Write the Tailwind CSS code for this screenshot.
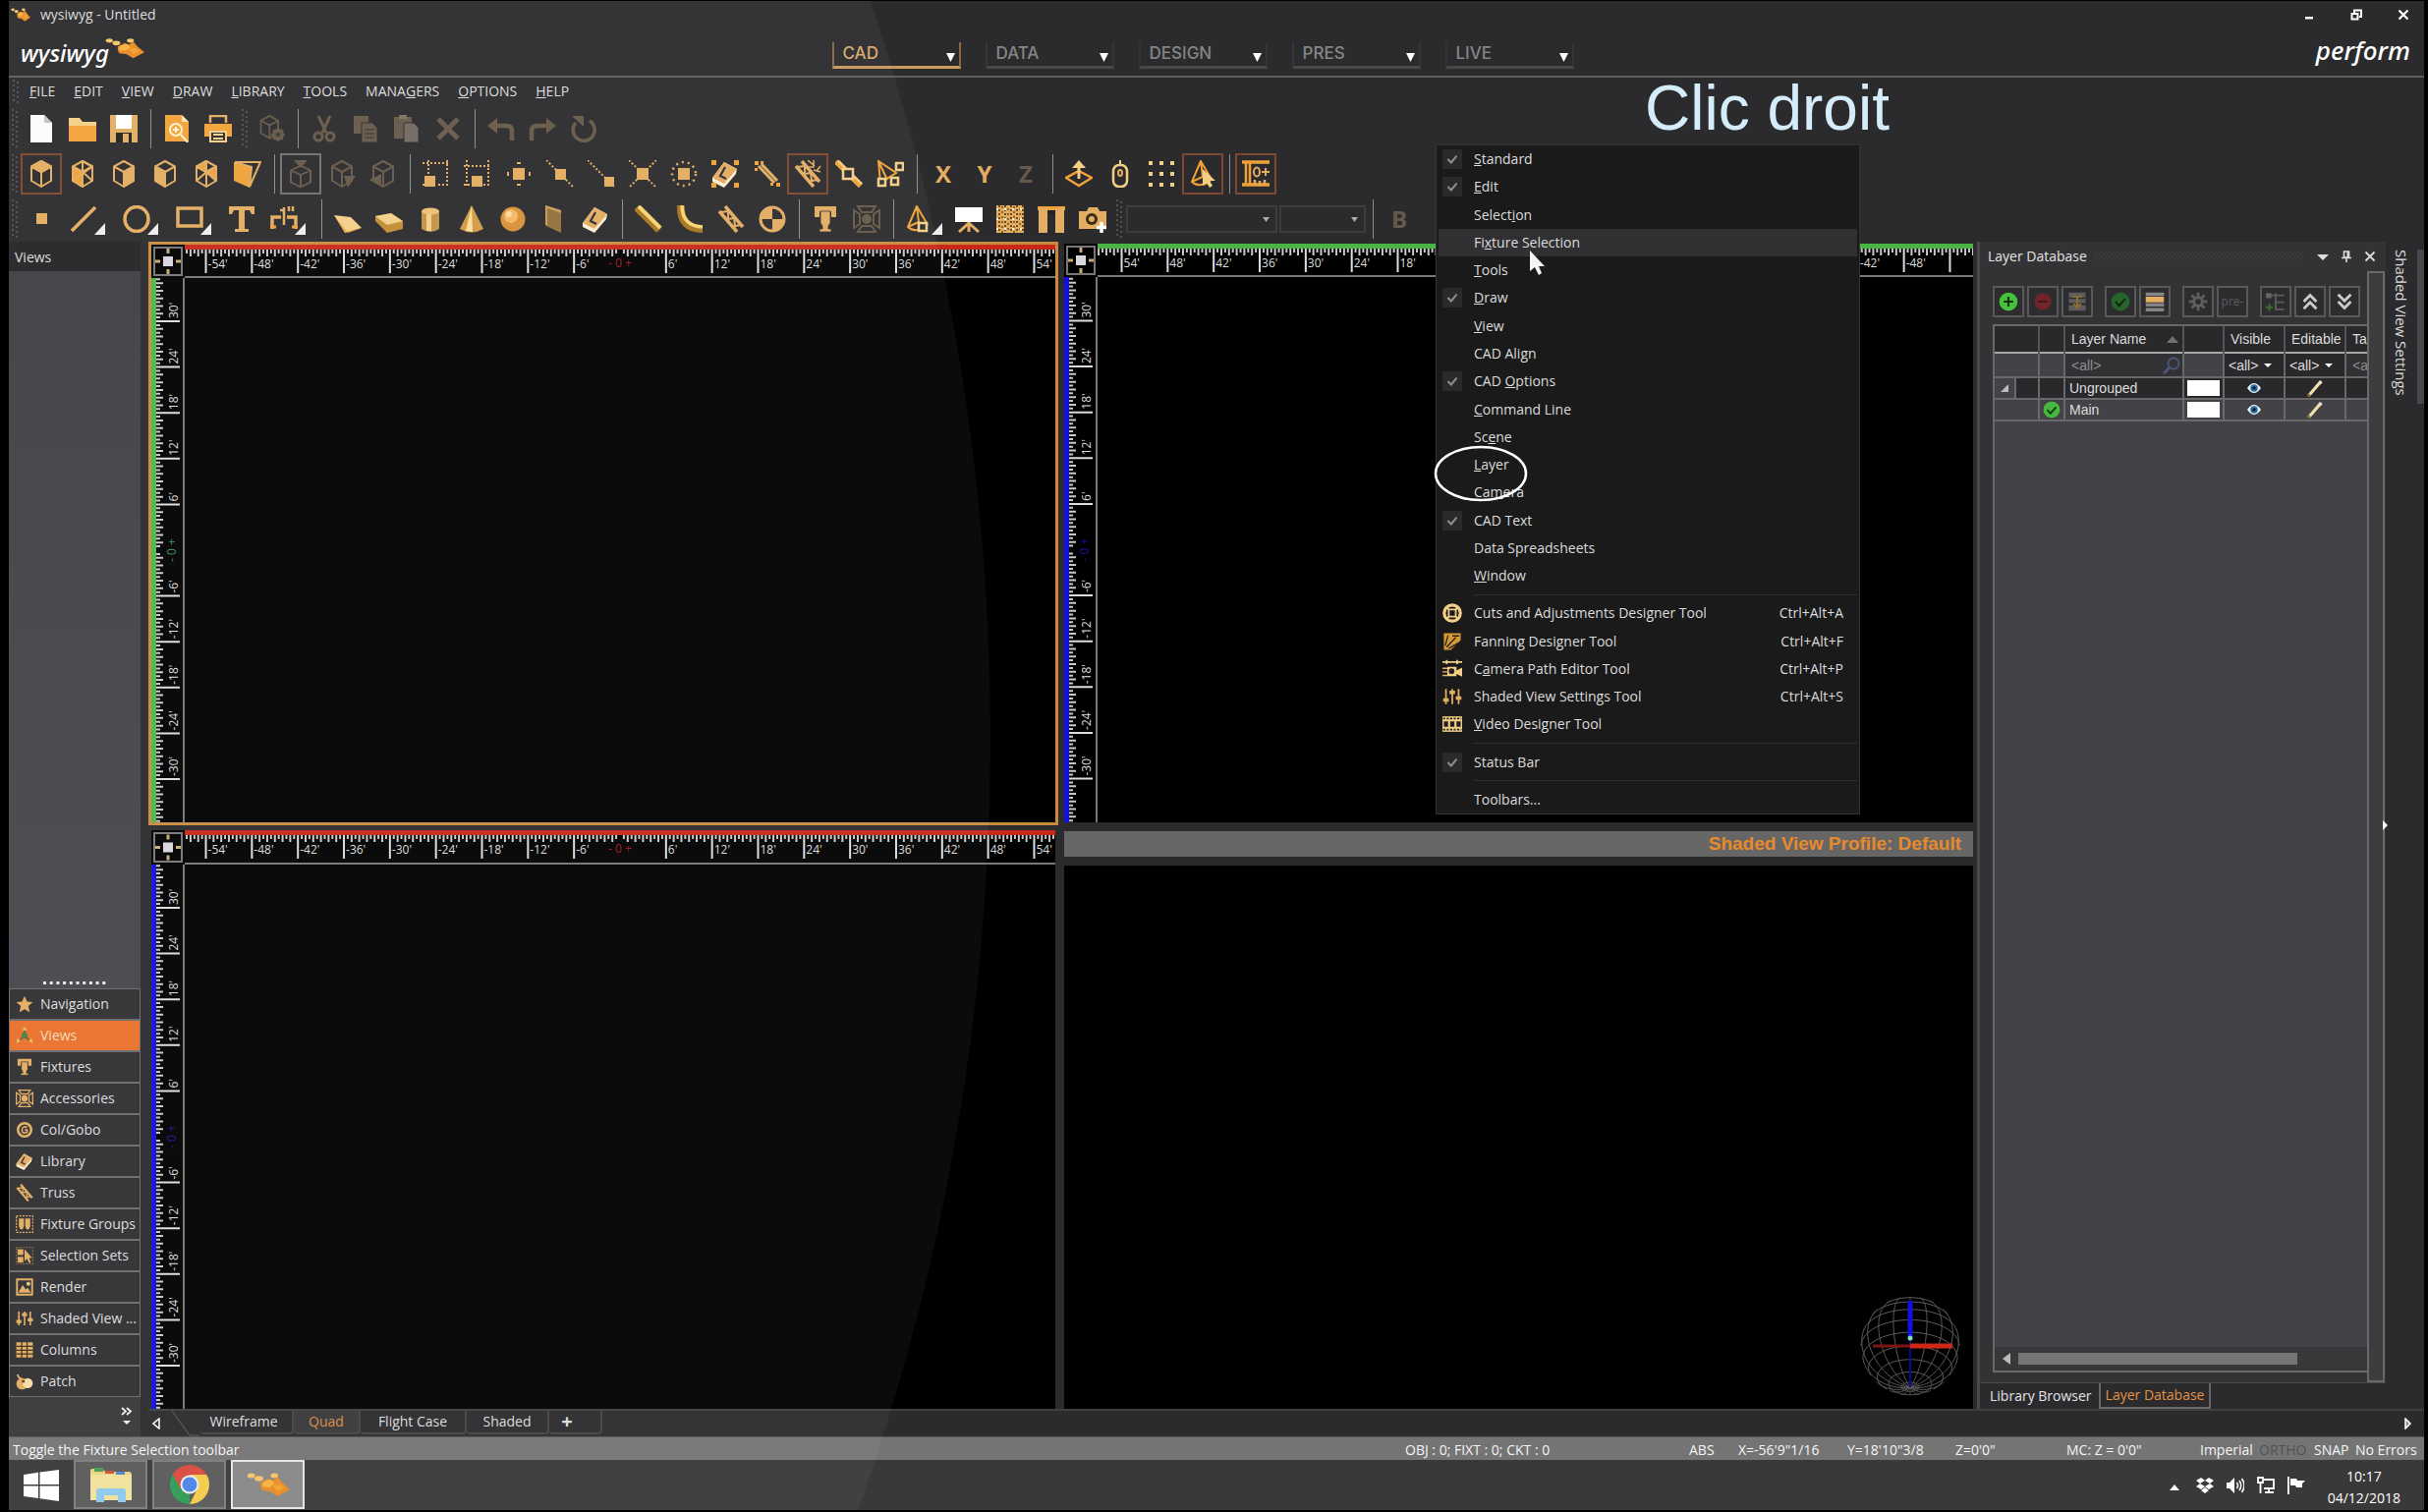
<!DOCTYPE html>
<html lang="en">
<head>
<meta charset="utf-8">
<title>wysiwyg - Untitled</title>
<script src="https://cdn.jsdelivr.net/npm/@tailwindcss/browser@4"></script>
</head>
<body class="h-screen overflow-hidden bg-black font-['Open_Sans',sans-serif] text-sm leading-5 font-medium text-[#dcdcdc]">
<div class="relative flex h-full flex-col overflow-hidden border-t border-r-4 border-b-2 border-l-9 border-black bg-[#2b2b2e]">

  <!-- Title and module tabs -->
  <header class="grid h-[78px] shrink-0 grid-cols-[1fr_auto_1fr] border-b-2 border-[#5e5e60] pr-7">
    <div class="flex flex-col">
      <h1 class="flex h-7 items-center gap-[6px] pl-[2px]"><svg class="h-4 w-5" viewBox="0 0 28 28" preserveAspectRatio="none" data-icon="splash"></svg><span class="pl-[4px]">wysiwyg - Untitled</span></h1>
      <div class="flex h-[46px] items-start pl-3">
        <span class="pt-[9px] font-['Noto_Sans',sans-serif] text-2xl leading-8 font-medium text-white italic">wysiwyg</span>
        <svg class="mt-2 -ml-1 h-6 w-10" viewBox="0 0 28 28" preserveAspectRatio="none" data-icon="splash"></svg>
      </div>
    </div>
    <nav id="modules" class="flex items-start gap-[25px] pt-[42px]"></nav>
    <div class="-mr-7 flex flex-col items-end">
      <div class="flex h-7 items-center gap-[26px] pr-[10px] text-white">
        <button class="flex size-[22px] items-center justify-center" aria-label="Minimize"><svg class="size-3" viewBox="0 0 12 12"><path d="M2 8h8v2.500H2z" fill="currentColor"/></svg></button>
        <button class="flex size-[22px] items-center justify-center" aria-label="Restore"><svg class="size-3" viewBox="0 0 12 12" fill="none" stroke="currentColor" stroke-width="2"><path d="M4 4V1.500h7V8H9"/><path d="M1.500 5h6v5.500h-6z"/></svg></button>
        <button class="flex size-[22px] items-center justify-center" aria-label="Close"><svg class="size-3" viewBox="0 0 12 12" stroke="currentColor" stroke-width="2.200"><path d="M1.500 1.500l9 9M10.500 1.500l-9 9"/></svg></button>
      </div>
      <span class="pt-[2px] pr-[14px] font-['Noto_Sans',sans-serif] text-[26px] leading-10 font-medium text-white italic">perform</span>
    </div>
  </header>

  <!-- Menu bar -->
  <nav id="menubar" class="flex h-7 shrink-0 items-center gap-[19px] pl-2"></nav>

  <!-- Toolbars -->
  <div id="bar1" class="flex h-[47px] shrink-0 items-center"></div>
  <div id="bar2" class="flex h-[46px] shrink-0 items-center"></div>
  <div id="bar3" class="flex h-[46px] shrink-0 items-center"></div>

  <!-- Workspace -->
  <main class="flex min-h-0 flex-1">
    <aside class="mr-2 flex w-[134px] shrink-0 flex-col bg-[#38383b]">
      <h2 class="h-[30px] shrink-0 bg-[#242426] px-[6px] py-[6px]">Views</h2>
      <div class="flex flex-1 items-end justify-center bg-gradient-to-b from-[#3f3e43] to-[#47464c] pb-1">
        <svg class="h-[3px] w-16"><path d="M0 1.500h64" stroke="#e8e8e8" stroke-width="3" stroke-dasharray="3 3.700"/></svg>
      </div>
      <nav id="side" class="flex shrink-0 flex-col gap-[2px] border border-[#6a6a6c] bg-[#6a6a6c]"></nav>
      <button class="flex h-10 shrink-0 items-center justify-end pr-2" aria-label="More"><svg class="h-6 w-3" viewBox="0 0 12 24"><path d="M1 3l4 3.500L1 10M6 3l4 3.500L6 10" fill="none" stroke="#eee" stroke-width="1.800"/><path d="M2 16h8l-4 4z" fill="#eee"/></svg></button>
    </aside>

    <div class="flex min-w-0 flex-1 flex-col">
      <div class="flex min-h-0 flex-1">
        <div id="views" class="grid min-w-0 flex-1 grid-cols-2 grid-rows-[594fr_589fr] gap-x-[6px] gap-y-[5px]">
          <section class="grid grid-cols-[34px_1fr] grid-rows-[34px_1fr] border-3 border-[#c98a3e] bg-black" data-h="#c8281c" data-v="#4fb548" data-sign="1" aria-label="Plan view"></section>
          <section class="mt-[2px] mb-[3px] grid grid-cols-[34px_1fr] grid-rows-[34px_1fr] bg-black" data-h="#4ab544" data-v="#1010e0" data-sign="-1" aria-label="Side view"></section>
          <section class="mx-[3px] grid grid-cols-[34px_1fr] grid-rows-[35px_1fr] bg-black" data-h="#c8281c" data-v="#1010e0" data-sign="1" aria-label="Front view"></section>
          <section class="flex flex-col" aria-label="Shaded view">
            <h3 class="mt-px mb-[9px] flex h-[26px] shrink-0 items-center justify-end bg-[#666667] pr-3 font-['Liberation_Sans',sans-serif] text-[19px] leading-6 font-bold text-[#e88a2a]">Shaded View Profile: Default</h3>
            <div class="flex flex-1 items-end justify-end bg-black pr-3 pb-3"><svg id="globe" class="size-[104px]" viewBox="-52 -52 104 104"></svg></div>
          </section>
        </div>

        <!-- Layer database panel -->
        <div class="flex w-[459px] shrink-0">
          <div class="ml-1 flex w-[416px] flex-col border-l-3 border-[#4a4a4c] bg-[#333336]">
            <div class="flex h-[30px] shrink-0 items-center pr-1 pl-2">
              <h2 class="text-[#e4e4e4]">Layer Database</h2>
              <svg class="mx-2 h-2 min-w-0 flex-1"><path d="M0 1h400M2 4h400M0 7h400" stroke="#505052" stroke-dasharray="1 3"/></svg>
              <button class="flex size-6 items-center justify-center" aria-label="Panel menu"><svg class="size-3" viewBox="0 0 12 12"><path d="M0 4h12L6 10z" fill="#ddd"/></svg></button>
              <button class="flex size-6 items-center justify-center" aria-label="Pin"><svg class="size-3" viewBox="0 0 12 12" fill="none" stroke="#ddd" stroke-width="1.600"><path d="M3.500 1h5v6h-5zM1 7.500h10M6 8v4M7.300 1v6"/></svg></button>
              <button class="flex size-6 items-center justify-center" aria-label="Close panel"><svg class="size-3" viewBox="0 0 12 12" stroke="#ddd" stroke-width="1.800"><path d="M1.500 1.500l9 9M10.500 1.500l-9 9"/></svg></button>
            </div>
            <div class="flex min-h-0 flex-1">
              <div class="flex min-w-0 flex-1 flex-col pl-[13px]">
                <div id="layerTools" class="flex h-[54px] shrink-0 items-center gap-[3px] pt-[7px]"></div>
                <div class="mb-[10px] flex min-h-0 flex-1 flex-col overflow-hidden border-2 border-r-0 border-[#69696b] bg-[#434247]">
                  <table class="w-[386px] table-fixed border-collapse font-['Liberation_Sans',sans-serif] text-sm leading-[18px] whitespace-nowrap">
                    <colgroup><col class="w-[45px]"><col class="w-[26px]"><col class="w-[121px]"><col class="w-[41px]"><col class="w-[62px]"><col class="w-[62px]"><col></colgroup>
                    <thead>
                      <tr class="h-[27px] border-b-2 border-[#a8a8a8] bg-[#29292b]">
                        <th class="border-r-2 border-[#555557]"></th><th class="border-r-2 border-[#555557]"></th>
                        <th class="border-r-2 border-[#555557] pl-[6px] text-left font-normal"><div class="flex items-center justify-between">Layer Name<svg class="mr-1 h-2 w-3" viewBox="0 0 12 8"><path d="M0 8h12L6 1z" fill="#707072"/></svg></div></th>
                        <th class="border-r-2 border-[#555557]"></th>
                        <th class="border-r-2 border-[#555557] pl-[6px] text-left font-normal">Visible</th>
                        <th class="border-r-2 border-[#555557] pl-[6px] text-left font-normal">Editable</th>
                        <th class="pl-[6px] text-left font-normal">Ta</th>
                      </tr>
                    </thead>
                    <tbody>
                      <tr class="h-[25px] border-b-2 border-[#69696b]">
                        <td class="border-r-2 border-[#69696b]"></td><td class="border-r-2 border-[#69696b]"></td>
                        <td class="border-r-2 border-[#69696b] bg-[#323234]"><div class="flex items-center justify-between"><input class="w-20 bg-transparent pl-[6px] placeholder:text-[#8c8c8e]" placeholder="&lt;all&gt;" aria-label="Filter by layer name"><svg class="mr-[2px] size-[18px]" viewBox="0 0 18 18" fill="none" stroke="#4a5578" stroke-width="2"><circle cx="11" cy="7" r="5.500"/><path d="M7 11l-6 6" stroke-width="3"/></svg></div></td>
                        <td class="border-r-2 border-[#69696b]"></td>
                        <td class="border-r-2 border-[#69696b] bg-[#29292b]"><button class="flex w-full items-center justify-between pr-3 pl-1">&lt;all&gt;<svg class="h-1 w-2" viewBox="0 0 8 4"><path d="M0 0h8L4 4z" fill="#fff"/></svg></button></td>
                        <td class="border-r-2 border-[#69696b] bg-[#29292b]"><button class="flex w-full items-center justify-between pr-3 pl-1">&lt;all&gt;<svg class="h-1 w-2" viewBox="0 0 8 4"><path d="M0 0h8L4 4z" fill="#fff"/></svg></button></td>
                        <td class="bg-[#323234] pl-[6px] text-[#8c8c8e]">&lt;all&gt;</td>
                      </tr>
                      <tr class="h-[22px] border-b-2 border-[#69696b] bg-[#29292b]">
                        <td class="border-r-2 border-[#69696b] p-0"><div class="flex h-5 w-[22px] items-center justify-center border-r-2 border-[#69696b] bg-[#434247]"><svg class="size-2" viewBox="0 0 8 8"><path d="M0 8h8V0z" fill="#bbb"/></svg></div></td>
                        <td class="border-r-2 border-[#69696b]"></td><td class="border-r-2 border-[#69696b] pl-1">Ungrouped</td>
                        <td class="border-r-2 border-[#69696b] px-[3px] py-px"><div class="h-4 bg-white"></div></td>
                        <td class="border-r-2 border-[#69696b]"><svg class="mx-auto block h-[14px] w-5" data-icon="eye"></svg></td>
                        <td class="border-r-2 border-[#69696b]"><svg class="mx-auto block size-[18px]" data-icon="pencil"></svg></td><td></td>
                      </tr>
                      <tr class="h-[22px] border-b-2 border-[#69696b]">
                        <td class="border-r-2 border-[#69696b]"></td>
                        <td class="border-r-2 border-[#69696b]"><svg class="mx-auto block size-[18px]" data-icon="ok"></svg></td><td class="border-r-2 border-[#69696b] pl-1">Main</td>
                        <td class="border-r-2 border-[#69696b] px-[3px] py-px"><div class="h-4 bg-white"></div></td>
                        <td class="border-r-2 border-[#69696b]"><svg class="mx-auto block h-[14px] w-5" data-icon="eye"></svg></td>
                        <td class="border-r-2 border-[#69696b]"><svg class="mx-auto block size-[18px]" data-icon="pencil"></svg></td><td></td>
                      </tr>
                    </tbody>
                  </table>
                  <div class="mt-auto flex h-6 items-center gap-2 bg-[#38383b] pl-2"><svg class="h-3 w-2" viewBox="0 0 8 12"><path d="M8 0v12L0 6z" fill="#bbb"/></svg><div class="h-3 w-[284px] bg-[#757577]"></div></div>
                </div>
              </div>
              <div class="mr-px w-[18px] border-2 border-[#69696b] bg-[#3d3d40]"></div>
            </div>
            <div class="flex h-[27px] shrink-0 border-t border-[#4a4a4c] bg-[#2b2b2e]">
              <button class="h-[26px] pr-[7px] pl-[10px] text-[#e4e4e4]">Library Browser</button>
              <button class="h-[26px] border-2 border-t-0 border-[#69696b] px-[5px] pb-px text-[#e39244]">Layer Database</button>
            </div>
          </div>
          <div class="relative flex flex-1 justify-between pt-2">
            <svg class="absolute top-[588px] -left-1 h-3 w-2" viewBox="0 0 8 12"><path d="M1 1v10l5-5z" fill="#fff"/></svg>
            <div class="w-7">
              <button class="ml-1 w-6 text-[15px] leading-6 [writing-mode:vertical-rl]">Shaded View Settings</button>
            </div>
            <div class="h-[157px] w-[7px] bg-[#48474c]"></div>
          </div>
        </div>
      </div>
      <!-- View tabs -->
      <div class="flex h-7 shrink-0 items-center justify-between border-t-2 border-[#3f3f42] pr-3">
        <div id="viewTabs" class="flex h-full items-center"></div>
        <svg class="h-3 w-2" viewBox="0 0 8 12"><path d="M1 1v10l5-5z" fill="#888" stroke="#fff" stroke-width="1.500"/></svg>
      </div>
    </div>
  </main>

  <!-- Status bar -->
  <footer class="flex h-6 shrink-0 items-center border-t border-[#555] bg-[#747475] pt-[2px] pr-2 pl-1 whitespace-nowrap text-[#f4f4f4]">
    <span class="flex-1">Toggle the Fixture Selection toolbar</span>
    <span class="w-[289px]">OBJ : 0; FIXT : 0; CKT : 0</span><span class="w-[50px]">ABS</span><span class="w-[111px]">X=-56'9"1/16</span><span class="w-[110px]">Y=18'10"3/8</span><span class="w-[113px]">Z=0'0"</span><span class="w-[136px]">MC: Z = 0'0"</span>
    <span class="w-[60px]">Imperial</span><span class="w-14 text-[#525254]">ORTHO</span><span class="w-[42px]">SNAP</span><span class="w-[62px]">No Errors</span>
  </footer>

  <!-- Desktop taskbar -->
  <div class="flex h-[51px] shrink-0 items-stretch bg-[#39393a] text-[15px] text-white">
    <button class="flex w-[66px] items-center justify-center" aria-label="Start"><svg class="h-8 w-9" viewBox="0 0 36 32" fill="#fff"><path d="M0 5l15-2.300V15H0zM16.500 2.500L36 0v15H16.500zM0 16.500h15V29L0 27zM16.500 16.500H36V32l-19.500-2.700z"/></svg></button>
    <button class="mr-[5px] mb-px flex w-[75px] items-center justify-center border-2 border-[#7c7c7d] bg-[#59595a]" aria-label="Files"><svg class="h-9 w-[42px]" viewBox="0 0 42 36"><path d="M0 4q0-2 2-2h10l3 3h24q3 0 3 3v26H0z" fill="#e9d67e"/><path d="M4 1h9v4H4z" fill="#4c9a58"/><path d="M15 4h9v3h-9z" fill="#d05038"/><path d="M26 5h9v3h-9z" fill="#5088c8"/><path d="M0 8h42v26H0z" fill="#f1e29b"/><path d="M6 36V25q0-3 3-3h24q3 0 3 3v11h-8v-7H14v7z" fill="#8cc8ec"/></svg></button>
    <button class="mr-[5px] mb-px flex w-[75px] items-center justify-center border-2 border-[#7c7c7d] bg-[#59595a]" aria-label="Browser"><svg class="size-10" viewBox="0 0 40 40"><path d="M20 20L2.700 10A20 20 0 0 1 37.300 10z" fill="#d94b3d"/><path d="M20 20L2.700 10A20 20 0 0 0 20 40z" fill="#2f9a55"/><path d="M20 20L37.300 10A20 20 0 0 1 20 40L28 24z" fill="#f3cc4b"/><path d="M20 10h17.300L28 25z" fill="#f3cc4b"/><path d="M11 25L2.700 10 20 10z" fill="#d94b3d"/><path d="M2.700 10l8.500 15L20 29l-5 10.300A20 20 0 0 1 2.700 10z" fill="#2f9a55"/><circle cx="20" cy="20" r="9.500" fill="#eee"/><circle cx="20" cy="20" r="7.500" fill="#4a84e8"/></svg></button>
    <button class="mb-px flex w-[75px] items-center justify-center border-2 border-[#e4e4e4] bg-[#868687]" aria-label="wysiwyg"><svg class="h-7 w-[44px]" viewBox="0 0 28 28" preserveAspectRatio="none" data-icon="splash"></svg></button>
    <div class="ml-auto flex items-center gap-[13px] pr-[24px]">
      <svg class="mt-1 h-2 w-[10px]" viewBox="0 0 10 8"><path d="M0 7h10L5 1z" fill="#fff"/></svg>
      <svg class="ml-1 size-[18px]" viewBox="0 0 18 18" fill="#fff"><path d="M5 1l4 3-5 3-4-3zM13 1l5 3-4 3-5-3zM0 10l4-3 5 3-4 3zM18 10l-4-3-5 3 4 3zM5 14l4-3 4 3-4 3z"/></svg>
      <svg class="size-[18px]" viewBox="0 0 18 18" fill="none" stroke="#fff" stroke-width="1.500"><path d="M0 6h3l5-5v16l-5-5H0z" fill="#fff" stroke="none"/><path d="M10.500 6q2 3 0 6M13 4q3.500 5 0 10M15.500 2q5 7 0 14"/></svg>
      <svg class="size-[18px]" viewBox="0 0 18 18" fill="none" stroke="#fff" stroke-width="1.800"><path d="M7 3h10v9H7M12 12v4M8 16h9"/><path d="M1 1h5v5H1zM3.500 6v11"/></svg>
      <svg class="size-[18px]" viewBox="0 0 18 18" fill="#fff"><path d="M0 0h1.800v18H0zM3 2h6l1 2h8l-3 3v4H9L8 9H3z"/></svg>
      <div class="ml-[10px] pt-1 text-center text-sm leading-[22px]"><div>10:17</div><div>04/12/2018</div></div>
    </div>
  </div>

  <!-- Spotlight highlight laid over the left half -->
  <svg class="pointer-events-none absolute inset-0 size-full" viewBox="0 0 2458 1536" preserveAspectRatio="none" aria-hidden="true"><circle cx="-1367" cy="750" r="2366" fill="#fff" fill-opacity=".045"/></svg>
</div>

<!-- Toolbar context menu -->
<div id="popup" role="menu" class="absolute top-[147px] left-[1461px] flex h-[682px] w-[432px] flex-col border border-[#333335] bg-[#1a1a1b] px-[2px]"></div>
<svg class="pointer-events-none absolute top-[253px] left-[1556px] h-7 w-4" viewBox="0 0 16 28"><path d="M1 2v21l5-4 4 8 3-2-3-7h6z" fill="#f4f4f4"/></svg>
<svg class="pointer-events-none absolute top-[453px] left-[1459px] h-[58px] w-24" viewBox="0 0 96 58"><ellipse cx="48" cy="29" rx="46" ry="27" fill="none" stroke="#fff" stroke-width="2.500"/></svg>
<p class="pointer-events-none absolute top-[74px] left-[1674px] font-['Liberation_Sans',sans-serif] text-[64px] leading-[72px] font-normal text-[#d5edfb]">Clic droit</p>

<script>
const A='#e3ad62', B='#f0a238', D='#67594a', L='#f3cf86', K='#2d2d30';
const hex='M14 1L24 6.500V21L14 27 4 21V6.500z';
const cube=(c,body='')=>`<g fill="none" stroke="${c}" stroke-width="2" stroke-linejoin="round">${body}<path d="${hex}"/><path d="M4 6.500L14 12 24 6.500M14 12V27"/></g>`;
const sq=(x,y,c=A,s=9)=>`<rect x="${x}" y="${y}" width="${s}" height="${s}" fill="${c}"/>`;
const dash=(d,c=A)=>`<path d="${d}" fill="none" stroke="${c}" stroke-width="2" stroke-dasharray="2 2"/>`;
const truss=`<path d="M2 6L20 27M8 1L26 22" stroke="${A}" stroke-width="3.500"/><path d="M4 7l7-1 0 8 6-1 1 8 6-1" fill="none" stroke="${A}" stroke-width="2"/>`;
const book=`<path d="M1 18L13 2l13 7-1 5-12 14-12-6z" fill="#fbf0cf"/><path d="M1 18L13 2l13 7-13 15z" fill="${A}"/><path d="M14 7l-5 9 6 3" fill="none" stroke="${K}" stroke-width="2.200"/>`;
const cone=`<path d="M10 1L1 22q6 6 16 1 5-3 3-5zM10 1l2 16-11 5M12 17l6 6" fill="none" stroke="${B}" stroke-width="2"/>`;
const par=`<path d="M3 1h22v11h-5v-6H8v6H3z" fill="${A}"/><path d="M9 6h10v12l-2 3v3h3v3H8v-3h3v-3l-2-3z" fill="${A}" stroke="${K}" stroke-width=".8"/>`;
const barn=c=>`<g fill="none" stroke="${c}" stroke-width="2"><path d="M5 1h18l-4 6H9zM5 27h18l-4-6H9zM1 5v18l6-4V9zM27 5v18l-6-4V9z"/></g><circle cx="14" cy="14" r="5" fill="${c}"/>`;
const sliders=`<path d="M5 3v22M14 3v22M23 3v22" stroke="${A}" stroke-width="2.500"/><path d="M1 19h8M10 8h8M19 16h8" stroke="${A}" stroke-width="5"/>`;
const icons={
 splash:`<g fill="#f6c46a"><circle cx="3" cy="5" r="2.500"/><circle cx="8" cy="8" r="2.800"/><circle cx="18" cy="5" r="2.500"/></g><path d="M9 12l5-4 3 2 3-4 3 6 5 7-8 7-5-5-5-1-1-4z" fill="#e98b25"/><path d="M11 11l5-2 2 4-3 4-5-1z" fill="#f8b23f"/><path d="M17 15l5-1 2 4-4 3z" fill="#f5a030"/>`,
 file:`<path d="M3 0h14l8 8v20H3z" fill="#fbfbfb"/><path d="M17 0v8h8z" fill="#c4c4c4"/>`,
 open:`<path d="M0 3h11l3 4h14v20H0z" fill="${L}"/><path d="M0 11h28v16H0z" fill="#f2a33a"/>`,
 save:`<path d="M0 0h28v28H0z" fill="${A}"/><path d="M6 0h16v14H6z" fill="#fff"/><path d="M6 18h16v10H6z" fill="#222"/><path d="M13 19h6v9h-6z" fill="${A}"/>`,
 preview:`<path d="M2 0h17l7 7v20H2z" fill="#f2a33a"/><path d="M19 0v7h7z" fill="#f8e3b5"/><circle cx="13" cy="15" r="6" fill="none" stroke="#fff3cf" stroke-width="2"/><path d="M18 20l7 8M13 12v6M10 15h6" stroke="#fff3cf" stroke-width="2"/>`,
 print:`<path d="M6 8V1h16v7" fill="none" stroke="${A}" stroke-width="2.500"/><path d="M0 9h28v13H0z" fill="#f2a33a"/><path d="M6 17h16v10H6z" fill="${K}" stroke="${L}" stroke-width="2"/><path d="M9 20h10M9 24h10" stroke="${L}" stroke-width="2"/>`,
 cubegear:`<g transform="scale(.88)">${cube(D)}</g><circle cx="21" cy="20" r="4.500" fill="${K}" stroke="${D}" stroke-width="3"/><path d="M21 13v14M14 20h14M16 15l10 10M26 15l-10 10" stroke="${D}" stroke-width="1.600"/><circle cx="21" cy="20" r="1.800" fill="${K}"/>`,
 cut:`<g fill="none" stroke="${D}" stroke-width="3"><path d="M8 1l8 17M20 1l-8 17"/><circle cx="8" cy="22" r="4"/><circle cx="20" cy="22" r="4"/></g>`,
 copy:`<path d="M2 1h15v18H2z" fill="${D}"/><path d="M10 8h11l5 5v15H10z" fill="${D}" stroke="${K}"/><path d="M13 15h10M13 19h10M13 23h10" stroke="${K}"/>`,
 paste:`<path d="M1 2h18v22H1z" fill="${D}"/><path d="M6 0h8v4H6z" fill="#80705c"/><path d="M11 8h10l5 5v15H11z" fill="#726960" stroke="${K}"/>`,
 del:`<path d="M4 4l20 20M24 4L4 24" stroke="${D}" stroke-width="5"/>`,
 undo:`<path d="M25 26V16q0-5-6-5H8" fill="none" stroke="${D}" stroke-width="4.500"/><path d="M0 11l10-8v16z" fill="${D}"/>`,
 redo:`<path d="M3 26V16q0-5 6-5h11" fill="none" stroke="${D}" stroke-width="4.500"/><path d="M28 11l-10-8v16z" fill="${D}"/>`,
 refresh:`<path d="M20 6a11 11 0 1 1-14 2" fill="none" stroke="${D}" stroke-width="3.500"/><path d="M2 1h12v11z" fill="${D}"/>`,
 top:cube(A,`<path d="M14 1L24 6.500 14 12 4 6.500z" fill="${A}"/>`),
 bottom:cube(A,`<path d="M4 6.500L14 12V27L4 21z" fill="${B}"/><path d="M14 1L24 6.500 14 12zM4 21l20-14.500M14 12l10 9"/>`),
 right:cube(A,`<path d="M14 12l10-5.500V21l-10 6z" fill="${A}"/>`),
 left:cube(A,`<path d="M4 6.500L14 12v15L4 21z" fill="${A}"/>`),
 back:cube(A,`<path d="M14 1L4 6.500 14 12zM14 12l10-5.500V21z" fill="${B}"/><path d="M4 21l10-9 10 9"/>`),
 persp:`<path d="M0 2l18 5-2 21L0 21z" fill="${B}"/><path d="M1 2h26L16 27 18 7z" fill="none" stroke="${A}" stroke-width="2"/>`,
 cdown:`<g transform="translate(0 5) scale(1 .83)">${cube(D)}</g><path d="M7 0h14l-7 8z" fill="${D}"/>`,
 cright:cube(D)+`<path d="M16 16h12L20 28z" fill="${D}"/>`, cleft:cube(D)+`<path d="M0 20l12-6v13z" fill="${D}"/>`,
 snap1:dash('M6 0v28M25 0v28M0 3h28M0 25h28')+`<path d="M3 15h12v12H3z" fill="${K}"/>`+sq(2,16,A,11),
 snap2:dash('M3 0v28M25 0v28M0 6h28M0 25h28')+sq(8,16,A,11),
 snap3:sq(8,8,A,12)+`<path d="M12 3h4M12 25h4M3 12v4M25 12v4" stroke="${A}" stroke-width="2"/>`,
 snap4:dash('M0 0L28 28')+sq(9,9,A,11), snap5:dash('M0 0L28 28')+sq(17,17,A,10), snap6:dash('M0 0L28 28M28 0L0 28')+sq(8,8,A,12),
 snap7:`<circle cx="14" cy="14" r="12" fill="none" stroke="${A}" stroke-width="2.500" stroke-dasharray="2 4"/>`+sq(8,8,A,12),
 snap8:book+sq(0,0,B,5)+sq(23,0,B,5)+sq(0,23,B,5)+sq(23,23,B,5),
 snap9:`<path d="M6 6l16 17M9 4l16 17" stroke="${A}" stroke-width="3"/>`+sq(2,1,B,4)+sq(8,1,B,3)+sq(18,23,B,3)+sq(24,23,B,4)+sq(2,8,B,3),
 snap10:truss+`<path d="M14 0l7 6M27 12l-7-2M20 0v7h-6M27 6l-4 5" stroke="${A}" stroke-width="1.500" fill="none"/>`,
 snap11:`<path d="M1 1l25 25" stroke="${B}" stroke-width="6"/><path d="M3 1l24 23" stroke="${L}" stroke-width="2"/><rect x="8" y="9" width="10" height="10" fill="${K}" stroke="${L}" stroke-width="2.500"/>`,
 snap12:`<path d="M2 1l2 22 16-10zM2 1l9 19" fill="none" stroke="${B}" stroke-width="2"/><g fill="${K}" stroke="${L}" stroke-width="2.500"><path d="M20 3h7v7h-7zM2 19h7v7H2zM15 18h7v7h-7z"/></g>`,
 plane:`<path d="M14 11l13 7-13 8-13-8z" fill="none" stroke="${B}" stroke-width="2.500"/><path d="M14 2v17" stroke="${L}" stroke-width="3"/><path d="M7 8l7-8 7 8z" fill="${L}"/>`,
 mouse:`<rect x="7" y="5" width="14" height="22" rx="6" fill="none" stroke="${L}" stroke-width="2.500"/><path d="M14 0v5" stroke="${L}" stroke-width="2"/><ellipse cx="14" cy="13" rx="2" ry="3" fill="none" stroke="${A}" stroke-width="2"/>`,
 grid:[1,12,23].flatMap(x=>[1,12,23].map(y=>sq(x,y,L,4))).join(''),
 pick:`<g transform="translate(2 0)">${cone}</g><path d="M14 9v17l4-3 3 5 3-2-3-5h6z" fill="${L}"/>`,
 dims:`<path d="M0 2h28M0 25h28" stroke="${B}" stroke-width="3.500"/><path d="M4 2v23M8 2v23" stroke="${B}" stroke-width="2.500"/><ellipse cx="15" cy="12" rx="3" ry="4.500" fill="none" stroke="${A}" stroke-width="2"/><path d="M20 12h8M24 8v8" stroke="${A}" stroke-width="2"/><path d="M13 25v-5M18 25v-4M23 25v-5" stroke="${A}" stroke-width="2.500"/>`,
 point:sq(9,8,A,11),
 line:`<path d="M2 26L26 2" stroke="${A}" stroke-width="3.500"/>`, circle:`<ellipse cx="14" cy="14" rx="12" ry="12.500" fill="none" stroke="${A}" stroke-width="3.500"/>`,
 rect:`<path d="M2 3h24v18H2z" fill="none" stroke="${A}" stroke-width="3.500"/>`,
 T:`<path d="M1 1h26v8h-3l-2-4h-5v19h4v3H7v-3h4V5H6L4 9H1z" fill="${A}"/>`,
 dim:`<path d="M2 24V12h9M26 24V12h-9" fill="none" stroke="${A}" stroke-width="3.500"/><path d="M14 2v18M10 5h4M19 1v5M23 1v5" stroke="${A}" stroke-width="2.500"/><path d="M0 22h6M22 22h6" stroke="${B}" stroke-width="3"/>`,
 plate:`<path d="M0 10l17 2 11 11-17 5z" fill="${L}"/><path d="M0 10l11 17 17-4-14 5z" fill="${B}"/>`,
 slab:`<path d="M0 11l16-3 12 8v8l-16 4L0 16z" fill="#c38c35"/><path d="M0 11l16-3 12 8-16 4z" fill="${L}"/>`,
 cyl:`<path d="M5 6h18v18q-9 6-18 0z" fill="#c2934a"/><path d="M10 8h5v18h-5z" fill="${L}"/><ellipse cx="14" cy="6" rx="9" ry="3.500" fill="#edc176"/>`,
 cone:`<path d="M14 0l12 24q-12 7-24 0z" fill="#d19a45"/><path d="M14 0l1 27-7-1z" fill="#fbdc98"/>`,
 ball:`<circle cx="14" cy="14" r="12.500" fill="#d9913a"/><circle cx="12" cy="11" r="7" fill="#f3b863"/><circle cx="10" cy="9" r="3" fill="#fbdc9d"/>`,
 wall:`<path d="M5 0l16 5v23L6 21z" fill="#94713c"/><path d="M5 0l16 5v3L7 3v18l-2-1z" fill="#c59d58"/>`,
 book, 
 pipe:`<path d="M2 2l23 23" stroke="#a8741f" stroke-width="8"/><path d="M4 1l22 22" stroke="#f6d472" stroke-width="4"/>`,
 elbow:`<path d="M5 0q-1 24 22 24" fill="none" stroke="#a8741f" stroke-width="8"/><path d="M6 0q0 21 21 22" fill="none" stroke="#f6d472" stroke-width="3.500"/>`,
 truss, mark:`<circle cx="14" cy="14" r="12" fill="${K}" stroke="${A}" stroke-width="3"/><path d="M14 14V1A13 13 0 0 0 1 14zM14 14v13a13 13 0 0 0 13-13z" fill="${A}"/>`,
 par, barn:barn(D), barnA:barn(A),
 focus:cone+`<rect x="12" y="18" width="8" height="8" fill="${K}" stroke="${L}" stroke-width="2.500"/>`,
 screen:`<path d="M0 2h28v15H0z" fill="#fff"/><path d="M14 17v10M14 18L4 27M14 18l10 9" stroke="${A}" stroke-width="3"/>`,
 texture:`<path d="M0 0h28v28H0z" fill="${A}"/><path d="M3 0v28M9 0v28M15 0v28M21 0v28M27 0v28" stroke="#6b4a1e" stroke-width="2" stroke-dasharray="2 2"/><path d="M6 1v28M12 3v25M18 1v28M24 3v25" stroke="#8c6227" stroke-width="2" stroke-dasharray="2 3"/><path d="M0 4h28M0 14h28M0 24h28" stroke="#fbf0d4" stroke-width="2" stroke-dasharray="2 6"/>`,
 drape:`<path d="M0 1h28v4H0z" fill="${B}"/><path d="M1 3h9v25H1zM18 3h9v25h-9z" fill="${A}"/><path d="M10 5h8v4h-8z" fill="#222"/>`,
 camera:`<path d="M0 6h8l2-4h9l2 4h7v18H0z" fill="${A}"/><circle cx="13" cy="14" r="6" fill="#3b2c15"/><circle cx="13" cy="14" r="3" fill="${A}"/><path d="M23 17v11M18 22.500h10" stroke="#fff" stroke-width="3.500"/>`,
 star:`<path d="M14 1l4 9 9 1-7 6 2 10-8-5-8 5 2-10-7-6 9-1z" fill="${A}"/>`,
 axes:`<path d="M14 2v12L4 24M14 14l10 10" fill="none" stroke="#7b5b34" stroke-width="3"/><circle cx="14" cy="14" r="5" fill="#4b7f46"/><path d="M14 0l4 6h-8zM1 26l2-8 5 5zM27 26l-2-8-5 5z" fill="#e9c05d"/>`,
 gobo:`<circle cx="14" cy="14" r="10.500" fill="none" stroke="${A}" stroke-width="4"/><path d="M18 10q-7-3-8 4t8 4v-4h-4" fill="none" stroke="${A}" stroke-width="2.500"/>`,
 groups:`<rect x="1" y="1" width="26" height="26" fill="none" stroke="${A}" stroke-width="2" stroke-dasharray="3 2"/><path d="M5 5h8v12l-2 5H7l-2-5zM15 5h8v12l-2 5h-4l-2-5z" fill="${A}"/>`,
 sets:`<rect x="1" y="1" width="26" height="26" fill="none" stroke="#80653e" stroke-width="2" stroke-dasharray="3 2"/>`+sq(3,4,A,9)+sq(3,16,A,9)+`<path d="M14 4v19l4-4 3 7 3-2-3-6h5z" fill="${A}"/>`,
 render:`<path d="M2 2h24v24H2z" fill="none" stroke="${A}" stroke-width="3"/><path d="M4 23l7-12 5 7 3-3 5 8z" fill="${A}"/><circle cx="20" cy="9" r="3" fill="${L}"/>`,
 sliders, columns:`<path d="M1 2h26v24H1z" fill="${A}"/><path d="M9.500 2v24M18 2v24M1 8.500h26M1 14.500h26M1 20.500h26" stroke="#3b2f1d" stroke-width="2"/>`,
 patch:`<path d="M3 3q2 8 7 6" fill="none" stroke="${A}" stroke-width="3"/><circle cx="10" cy="18" r="9" fill="${A}"/><circle cx="19" cy="17" r="8" fill="#f6dba5"/><circle cx="12" cy="14" r="2.500" fill="#5d4423"/>`,
 cuts:`<circle cx="14" cy="14" r="11.500" fill="none" stroke="${L}" stroke-width="4.500"/><path d="M9 9h10v10H9z" fill="none" stroke="${L}" stroke-width="2.500"/><path d="M6 6l3 3M22 6l-3 3M6 22l3-3M22 22l-3-3" stroke="${L}" stroke-width="2.500"/>`,
 fan:`<path d="M2 2h24v10L12 26H2z" fill="#d59a38"/><path d="M4 20L8 5M6 22L19 8M9 24l13-8" stroke="#2a2115" stroke-width="1.800"/><path d="M14 6h10" stroke="#2a2115" stroke-width="2"/>`,
 path:`<path d="M0 4h28M6 1v6M21 1v6" stroke="${L}" stroke-width="2.500"/><path d="M7 11h13v13H7zM20 16l8-4v13l-8-4z" fill="${L}"/><circle cx="13" cy="17" r="4" fill="#222"/><path d="M0 13h7M0 18h7M0 23h7" stroke="${A}" stroke-width="2"/>`,
 film:`<path d="M0 3h28v22H0z" fill="${L}"/><path d="M1 6h26M1 22h26" stroke="#222" stroke-width="2.500" stroke-dasharray="3 2"/><path d="M2 10h6v8H2zM11 10h6v8h-6zM20 10h6v8h-6z" fill="#222"/>`,
 plus:`<circle cx="14" cy="14" r="13" fill="#46c33c"/><path d="M14 7v14M7 14h14" stroke="#12350f" stroke-width="3"/>`,
 minus:`<circle cx="14" cy="14" r="12" fill="#722528"/><path d="M7 14h14" stroke="#41191b" stroke-width="3"/>`,
 merge:`<path d="M2 1h24v7H2zM2 10h24v6H2zM2 19h24v8H2z" fill="#5d5d5d"/><path d="M14 7v15M9 17l5 6 5-6M7 7h14" fill="none" stroke="#8d6c35" stroke-width="3"/>`,
 okdim:`<circle cx="14" cy="14" r="13" fill="#28652a"/><path d="M7 14l5 6 9-10" fill="none" stroke="#0f2b10" stroke-width="3"/>`,
 ok:`<circle cx="14" cy="14" r="13" fill="#48b93f"/><path d="M7 14l5 6 9-10" fill="none" stroke="#0e3b0d" stroke-width="3"/>`,
 layers:`<path d="M1 1h26v5H1zM1 16h26v5H1zM1 23h26v5H1z" fill="#858585"/><path d="M1 7h26v8H1z" fill="${A}"/>`,
 gear:`<g stroke="#5e5e60" stroke-width="4"><path d="M14 1v26M1 14h26M5 5l18 18M23 5L5 23"/></g><circle cx="14" cy="14" r="8" fill="#5e5e60"/><circle cx="14" cy="14" r="4" fill="${K}"/>`,
 tree:`<path d="M0 2h8v7H0z" fill="#666"/><path d="M14 2v24M8 5h6M14 5h12M14 15h12M14 25h12" stroke="#5e5e60" stroke-width="2.500"/><path d="M5 17v10M0 22h10" stroke="#376e2f" stroke-width="3"/>`,
 up2:`<path d="M5 14l9-9 9 9M5 24l9-9 9 9" fill="none" stroke="#ccc" stroke-width="4"/>`,
 down2:`<path d="M5 4l9 9 9-9M5 14l9 9 9-9" fill="none" stroke="#ccc" stroke-width="4"/>`,
 eye:`<path d="M0 14Q14-6 28 14 14 34 0 14z" fill="#e8f2f8"/><circle cx="14" cy="14" r="7.500" fill="#2d6ea0"/><circle cx="14" cy="14" r="3.500" fill="#0a1c30"/>`,
 pencil:`<path d="M4 26L23 4" stroke="#f1dfa5" stroke-width="5"/><path d="M21 7l3-4" stroke="#e6e0da" stroke-width="5"/><path d="M3 27l3-3" stroke="#7a6a3a" stroke-width="4"/>`,
 check:`<path d="M6 14l6 6L22 8" fill="none" stroke="#8e8e8e" stroke-width="3.500"/>`
};
const svg=(n,cls)=>`<svg class="${cls}" viewBox="0 0 28 28" aria-hidden="true">${icons[n]}</svg>`;
const $=id=>document.getElementById(id);
document.querySelectorAll('[data-icon]').forEach(e=>{e.setAttribute('viewBox','0 0 28 28');e.innerHTML=icons[e.dataset.icon]});

$('modules').innerHTML=['CAD','DATA','DESIGN','PRES','LIVE'].map((t,i)=>`<button class="flex h-[27px] w-[131px] items-center justify-between border-x-2 border-b-3 pr-1 pb-[2px] pl-[9px] font-['Inter',sans-serif] text-[17px] font-medium ${i?'border-x-[#353538] border-b-[#48484a] text-[#858585]':'border-x-[#8a6742] border-b-[#c99a5c] text-[#d8a86c]'}">${t}<svg class="mt-2 size-[9px]" viewBox="0 0 9 9"><path d="M0 0h9L4.500 9z" fill="#fff"/></svg></button>`).join('');

const gripSvg='<svg class="h-10 w-3 shrink-0" aria-hidden="true"><path d="M4 0v40M8 2v40" stroke="#505052" stroke-width="2" stroke-dasharray="2 3"/></svg>';
$('menubar').innerHTML='<svg class="-mr-3 -ml-1 h-6 w-[10px]"><path d="M1 0v24M5 2v24" stroke="#505052" stroke-width="2" stroke-dasharray="2 3"/></svg>'+['_FILE','_EDIT','_VIEW','_DRAW','_LIBRARY','_TOOLS','MANA_GERS','_OPTIONS','_HELP'].map(t=>`<button>${t.replace(/_(.)/,'<u>$1</u>')}</button>`).join('');

function bar(id,spec){
 $(id).innerHTML=spec.map(s=>{
  if(s==='|')return '<div class="flex w-3 shrink-0 justify-center"><div class="h-10 w-px bg-[#8c8c8c]"></div></div>';
  if(s===':')return gripSvg;
  if(s[0]==='<')return s;
  const wide=s.endsWith('>'),on=s.endsWith('*'),gray=s.endsWith('~'),n=s.replace(/[>*~]$/,'');
  if('XYZB'.includes(n))return `<button class="flex h-[42px] w-[42px] shrink-0 items-center justify-center text-2xl font-bold ${n=='Z'||n=='B'?'text-[#67594a]':'text-[#e3ad62]'}">${n}</button>`;
  if(wide)return `<button class="flex h-[42px] ${n=='focus'?'w-[50px]':'w-[54px]'} shrink-0 items-center pl-2" aria-label="${n}">${svg(n,'size-7')}<svg class="-ml-1 mt-5 size-3" viewBox="0 0 12 12"><path d="M12 0v12H1z" fill="#eee"/></svg></button>`;
  return `<button class="flex h-[42px] w-[42px] shrink-0 items-center justify-center ${on?'border-2 border-[#7d4830]':gray?'border-2 border-[#707072]':''}" aria-label="${n}">${svg(n,'size-7')}</button>`;
 }).join('');
}
bar('bar1',[':','file','open','save','|','preview','print',':','cubegear','|','cut','copy','paste','del','|','undo','redo','refresh']);
bar('bar2',[':','top*','bottom','right','left','back','persp','|','cdown~','cright','cleft','|','snap1','snap2','snap3','snap4','snap5','snap6','snap7','snap8','snap9','snap10*','snap11','snap12','|','X','Y','Z','|','plane','mouse','grid','pick*','|','dims*']);
const combo=(w,l)=>`<label class="relative ${w} mx-px shrink-0"><select aria-label="${l}" class="h-7 w-full appearance-none border-2 border-[#3d3d40] bg-transparent"></select><svg class="absolute top-3 right-2 h-[5px] w-[7px]" viewBox="0 0 7 5"><path d="M0 0h7L3.500 5z" fill="#aaa"/></svg></label>`;
bar('bar3',[':','point','line>','circle>','rect>','T','dim>','|','plate','slab','cyl','cone','ball','wall','book','|','pipe','elbow','truss','mark','|','par','barn','|','focus>','screen','texture','drape','camera',':',combo('w-[154px]','Font'),combo('w-[88px]','Size'),'|','B']);

$('side').innerHTML=[['star','Navigation'],['axes','Views'],['par','Fixtures'],['barnA','Accessories'],['gobo','Col/Gobo'],['book','Library'],['truss','Truss'],['groups','Fixture Groups'],['sets','Selection Sets'],['render','Render'],['sliders','Shaded View ...'],['columns','Columns'],['patch','Patch']].map(([i,t],k)=>`<button class="flex h-[30px] items-center gap-[7px] pl-[6px] text-left whitespace-nowrap ${k==1?'bg-[#e8702a] text-[#f9d9b8]':'bg-[#303033]'}">${svg(i,'size-[18px] shrink-0')}${t}</button>`).join('');

$('layerTools').innerHTML=['plus','minus','merge','','okdim','layers','','gear','pre','','tree','up2','down2'].map(n=>n?`<button class="flex size-8 shrink-0 items-center justify-center border-2 border-[#59595b] bg-[#2d2d30]" aria-label="${n}">${n=='pre'?'<span class="text-xs text-[#5c5c5e]">pre-</span>':svg(n,'size-5')}</button>`:'<span class="w-[6px] shrink-0"></span>').join('');

$('viewTabs').innerHTML='<button class="w-[24px] pl-1" aria-label="Scroll tabs left"><svg class="h-3 w-2" viewBox="0 0 8 12"><path d="M7 1v10L1 6z" fill="none" stroke="#fff" stroke-width="1.500"/></svg></button><svg class="h-full w-[28px]" viewBox="0 0 28 26" fill="none" stroke="#4c4c4f" stroke-width="1.500"><path d="M0 0l18 25h10"/></svg>'+
[['Wireframe','w-24 pr-1 justify-center'],['Quad','w-[68px] justify-center text-[#d98c40] bg-[#38383b]'],['Flight Case','w-[108px] justify-center'],['Shaded','w-[84px] justify-center'],['+','w-[54px] pr-4 justify-center text-xl font-bold']].map(([t,c])=>`<button class="flex h-6 items-center self-start rounded-b border-r-2 border-b-2 border-[#434346] ${c}">${t}</button>`).join('');

const menu=[['_Standard',1],['_Edit',1],['Select_ion'],['Fi_xture Selection',0,1],['_Tools'],['_Draw',1],['_View'],['CAD Align'],['CAD _Options',1],['_Command Line'],['Sc_ene'],['_Layer'],['Ca_mera'],['CAD Text',1],['Data Spreadsheets'],['_Window'],null,['Cuts and Adjustments Designer Tool','cuts',0,'A'],['Fanning Designer Tool','fan',0,'F'],['C_amera Path Editor Tool','path',0,'P'],['Shaded View Settings Tool','sliders',0,'S'],['_Video Designer Tool','film'],null,['Status Bar',1],null,['Toolbars...']];
$('popup').innerHTML=menu.map(m=>m?`<button role="menuitem" class="flex min-h-0 flex-1 items-center pr-[14px] pl-1 text-left ${m[2]?'bg-[#303032]':''}"><span class="mr-3 flex size-5 shrink-0 items-center justify-center ${m[1]===1?'bg-[#2a2a2b]':''}">${m[1]?svg(m[1]===1?'check':m[1],m[1]===1?'size-4':'size-5'):''}</span><span class="flex-1">${m[0].replace(/_(.)/,'<u>$1</u>')}</span><span>${m[3]?'Ctrl+Alt+'+m[3]:''}</span></button>`:'<div class="flex h-[10px] shrink-0 items-center pl-9"><div class="h-px flex-1 bg-[#303032]"></div></div>').join('');

// Rulers: a labelled mark every 6 feet, twelve ticks between marks
function ruler(len,vert,color,sign,size){
 const mid=len/2,step=vert?46.600:46.830;let d='',big='',txt='';
 const zc=color==='#c8281c'?'#a01818':color==='#1010e0'?'#1414a0':'#3f8f52';
 for(let k=-130;k<=130;k++){const p=mid+k*step/12;if(p<1||p>len-1)continue;
  const n=k/12,whole=k%12===0;
  if(whole&&k){ if(vert)big+=`M5 ${p}H29`;else big+=`M${p} 5V29`;
   const v=(vert?-n:n*sign)*6,t=v+"'";
   if(!vert&&p>len-30&&sign<0)continue;
   txt+=vert?`<text transform="translate(27 ${p-3}) rotate(-90)">${t}</text>`:`<text x="${p+2}" y="24">${t}</text>`;
  }else if(k){const e=k%2?9:12;d+=vert?`M5 ${p}H${e}`:`M${p} 5V${e}`}
 }
 txt+=vert?`<text transform="translate(25 ${mid}) rotate(-90)" text-anchor="middle" fill="${zc}">- 0 +</text>`:`<text x="${mid}" y="23" text-anchor="middle" fill="${zc}">- 0 +</text>`;
 return (vert?`<path d="M0 0H5V${len}H0z" fill="${color}"/><path d="M${size-1} 0V${len}" stroke="#777" stroke-width="2"/>`:`<path d="M0 0H${len}V5H0z" fill="${color}"/><path d="M0 ${size-1}H${len}" stroke="#777" stroke-width="2"/>`)+
 `<path d="${d}" stroke="#c9c9c9" stroke-width="2"/><path d="${big}" stroke="#ddd" stroke-width="2"/><g fill="#ddd" font-family="Open Sans, sans-serif" font-size="12">${txt}</g>`;
}
document.querySelectorAll('#views section[data-h]').forEach(s=>{
 s.innerHTML='<div class="p-[2px]"><svg class="size-full border-2 border-[#777]" viewBox="0 0 26 26"><path d="M13 0v26M0 13h26" stroke="#c9ab78" stroke-width="3" stroke-dasharray="5 16"/><path d="M8 8h10v10H8z" fill="#d8d8dc"/></svg></div><div class="min-w-0 overflow-hidden"><svg class="block size-full"></svg></div><div class="min-h-0 overflow-hidden"><svg class="block size-full"></svg></div>';
 const [,h,v]=s.children;
 const draw=()=>{
  h.firstChild.innerHTML=ruler(h.clientWidth,false,s.dataset.h,+s.dataset.sign,h.clientHeight);
  v.firstChild.innerHTML=ruler(v.clientHeight,true,s.dataset.v,1,v.clientWidth);
 };
 draw();
 new ResizeObserver(draw).observe(h);
 new ResizeObserver(draw).observe(v);
});

// Orientation globe: visible hemisphere of a sphere tilted towards the viewer
(function(){
 const R=50,t=.56,seg=(f)=>{let p='',pen=false;for(let i=0;i<=72;i++){const [la,lo]=f(i/72),x=Math.cos(la)*Math.sin(lo),y=Math.sin(la),z=Math.cos(la)*Math.cos(lo);
  const yy=y*Math.cos(t)-z*Math.sin(t),zz=z*Math.cos(t)+y*Math.sin(t);if(zz<-.02){pen=false;continue}p+=`${pen?'L':'M'}${(x*R).toFixed(1)} ${(yy*R).toFixed(1)}`;pen=true}return p};
 let d='';const P=Math.PI;
 for(let a=-80;a<=80;a+=16)d+=seg(u=>[a*P/180,u*2*P-P]);
 for(let b=0;b<18;b++)d+=seg(u=>[u*P-P/2,b*P/9]);
 $('globe').innerHTML=`<path d="${d}" fill="none" stroke="#5c5c5c"/><path d="M0-8V42" stroke="#0a0a90" stroke-width="2"/><path d="M0-8V-46" stroke="#1010e0" stroke-width="5"/><path d="M-38 0H0" stroke="#7c1414" stroke-width="3"/><path d="M0 0H43" stroke="#d02818" stroke-width="5"/><circle cy="-8" r="2.500" fill="#7fe0b0"/>`;
})();
</script>
</body>
</html>
